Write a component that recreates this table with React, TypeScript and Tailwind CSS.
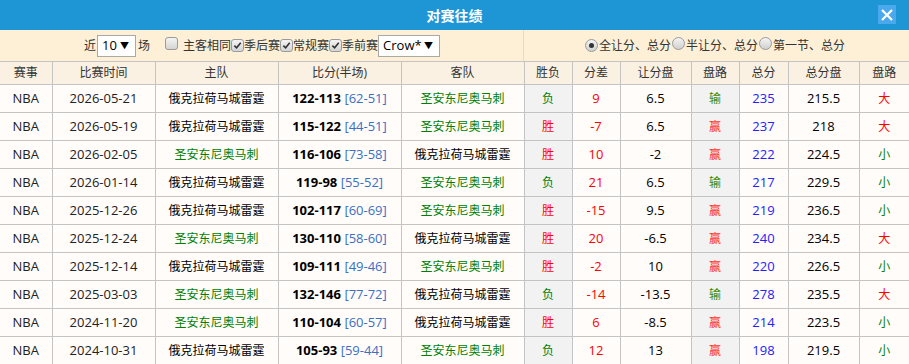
import React from 'react';

type Row = {
  date: string;
  homeSpurs: boolean;
  score: string;
  half: string;
  win: boolean;
  diff: string;
  line: string;
  cover: boolean;
  total: string;
  totalLine: string;
  big: boolean;
};

const OKC = '俄克拉荷马城雷霆';
const SAS = '圣安东尼奥马刺';

const ROWS: Row[] = [
  { date: '2026-05-21', homeSpurs: false, score: '122-113', half: '[62-51]', win: false, diff: '9', line: '6.5', cover: false, total: '235', totalLine: '215.5', big: true },
  { date: '2026-05-19', homeSpurs: false, score: '115-122', half: '[44-51]', win: true, diff: '-7', line: '6.5', cover: true, total: '237', totalLine: '218', big: true },
  { date: '2026-02-05', homeSpurs: true, score: '116-106', half: '[73-58]', win: true, diff: '10', line: '-2', cover: true, total: '222', totalLine: '224.5', big: false },
  { date: '2026-01-14', homeSpurs: false, score: '119-98', half: '[55-52]', win: false, diff: '21', line: '6.5', cover: false, total: '217', totalLine: '229.5', big: false },
  { date: '2025-12-26', homeSpurs: false, score: '102-117', half: '[60-69]', win: true, diff: '-15', line: '9.5', cover: true, total: '219', totalLine: '236.5', big: false },
  { date: '2025-12-24', homeSpurs: true, score: '130-110', half: '[58-60]', win: true, diff: '20', line: '-6.5', cover: true, total: '240', totalLine: '234.5', big: true },
  { date: '2025-12-14', homeSpurs: false, score: '109-111', half: '[49-46]', win: true, diff: '-2', line: '10', cover: true, total: '220', totalLine: '226.5', big: false },
  { date: '2025-03-03', homeSpurs: true, score: '132-146', half: '[77-72]', win: false, diff: '-14', line: '-13.5', cover: false, total: '278', totalLine: '235.5', big: true },
  { date: '2024-11-20', homeSpurs: true, score: '110-104', half: '[60-57]', win: true, diff: '6', line: '-8.5', cover: true, total: '214', totalLine: '223.5', big: false },
  { date: '2024-10-31', homeSpurs: false, score: '105-93', half: '[59-44]', win: false, diff: '12', line: '13', cover: true, total: '198', totalLine: '219.5', big: false },
];

const WIDTHS = [52, 103, 123, 123, 123, 48, 48, 71, 48, 49, 71, 50];
const HEADS = ['赛事', '比赛时间', '主队', '比分(半场)', '客队', '胜负', '分差', '让分盘', '盘路', '总分', '总分盘', '盘路'];

function Checkbox({ checked }: { checked?: boolean }) {
  return (
    <span className="inline-flex h-[13px] w-[13px] items-center justify-center rounded-[3px] border border-[#9a9a9a] bg-gradient-to-b from-[#f4f4f4] to-[#d4d4d4]">
      {checked && (
        <svg viewBox="0 0 10 10" className="h-[9px] w-[9px]">
          <path d="M1.5 5.2 L4 7.6 L8.6 2" fill="none" stroke="#333" strokeWidth="1.8" />
        </svg>
      )}
    </span>
  );
}

function Radio({ checked }: { checked?: boolean }) {
  return (
    <span className="inline-flex h-[13px] w-[13px] items-center justify-center rounded-full border border-[#9a9a9a] bg-gradient-to-b from-[#f4f4f4] to-[#d0d0d0]">
      {checked && <span className="h-[5px] w-[5px] rounded-full bg-[#333]" />}
    </span>
  );
}

function Select({ value, width }: { value: string; width: string }) {
  return (
    <span className={`inline-flex h-[22px] items-center justify-between border border-[#a9a9a9] bg-white pl-[4px] pr-[6px] text-[13px] text-black ${width}`}>
      <span>{value}</span>
      <span className="text-[9px]">▼</span>
    </span>
  );
}

export default function App() {
  const cell = 'h-[28px] border-b border-l border-[#c4c4c4] text-center whitespace-nowrap p-0';
  return (
    <div className="w-[909px] h-[364px] overflow-hidden bg-white text-[13px] text-[#222]" style={{ fontFamily: '"Open Sans", "Noto Sans CJK SC", sans-serif' }}>
      {/* Title */}
      <div className="relative flex h-[30px] items-center justify-center bg-[#1e96d6]">
        <span className="text-[14px] font-bold text-white">对赛往绩</span>
        <span className="absolute right-[13px] top-[5px] flex h-[19px] w-[18px] items-center justify-center bg-[#4aa8ec]">
          <svg viewBox="0 0 12 12" className="h-[12px] w-[12px]">
            <path d="M1 1 L11 11 M11 1 L1 11" stroke="white" strokeWidth="2.2" />
          </svg>
        </span>
      </div>

      {/* Filters */}
      <div className="flex h-[31px] bg-[#fdf0d6] text-[12px] text-[#333]">
        <div className="flex w-[524px] items-center border-r border-[#eed9b0] pl-[84px]">
          <span>近</span>
          <span className="ml-[1px]"><Select value="10" width="w-[39px]" /></span>
          <span className="ml-[2px]">场</span>
          <span className="ml-[15px]"><Checkbox /></span>
          <span className="ml-[5px]">主客相同</span>
          <Checkbox checked />
          <span>季后赛</span>
          <Checkbox checked />
          <span>常规赛</span>
          <Checkbox checked />
          <span>季前赛</span>
          <span><Select value="Crow*" width="w-[62px]" /></span>
        </div>
        <div className="flex flex-1 items-center pl-[61px]">
          <Radio checked />
          <span className="ml-[1px]">全让分、总分</span>
          <span className="ml-[1px]"><Radio /></span>
          <span className="ml-[1px]">半让分、总分</span>
          <span className="ml-[1px]"><Radio /></span>
          <span className="ml-[1px]">第一节、总分</span>
        </div>
      </div>

      {/* Table */}
      <table className="w-[909px] table-fixed border-collapse">
        <colgroup>
          {WIDTHS.map((w, i) => (
            <col key={i} style={{ width: w }} />
          ))}
        </colgroup>
        <thead>
          <tr className="bg-[#faf1e3] text-[#333]">
            {HEADS.map((h, i) => (
              <th key={i} className={`h-[23px] border-y border-[#c4c4c4] p-0 text-center text-[12px] font-normal ${i ? 'border-l' : ''}`}>
                {h}
              </th>
            ))}
          </tr>
        </thead>
        <tbody>
          {ROWS.map((r, i) => {
            const home = r.homeSpurs ? SAS : OKC;
            const away = r.homeSpurs ? OKC : SAS;
            return (
              <tr key={i} className="bg-[#fffcfa]">
                <td className={`${cell} border-l-0`}>NBA</td>
                <td className={cell}>{r.date}</td>
                <td className={`${cell} text-[12px] ${r.homeSpurs ? 'text-[#008000]' : 'text-black'}`}>{home}</td>
                <td className={cell}>
                  <b className="text-black">{r.score}</b> <span className="text-[#3a6fc4]">{r.half}</span>
                </td>
                <td className={`${cell} text-[12px] ${r.homeSpurs ? 'text-black' : 'text-[#008000]'}`}>{away}</td>
                <td className={`${cell} bg-[#f2f2f2] text-[12px] ${r.win ? 'text-[#ff0000]' : 'text-[#008000]'}`}>{r.win ? '胜' : '负'}</td>
                <td className={`${cell} text-[#ff0000]`}>{r.diff}</td>
                <td className={`${cell} text-black`}>{r.line}</td>
                <td className={`${cell} bg-[#f2f2f2] text-[12px] ${r.cover ? 'text-[#ff3333]' : 'text-[#3d8a00]'}`}>{r.cover ? '赢' : '输'}</td>
                <td className={`${cell} text-[#2222ff]`}>{r.total}</td>
                <td className={`${cell} text-black`}>{r.totalLine}</td>
                <td className={`${cell} text-[12px] ${r.big ? 'text-[#ff0000]' : 'text-[#008000]'}`}>{r.big ? '大' : '小'}</td>
              </tr>
            );
          })}
        </tbody>
      </table>
    </div>
  );
}
